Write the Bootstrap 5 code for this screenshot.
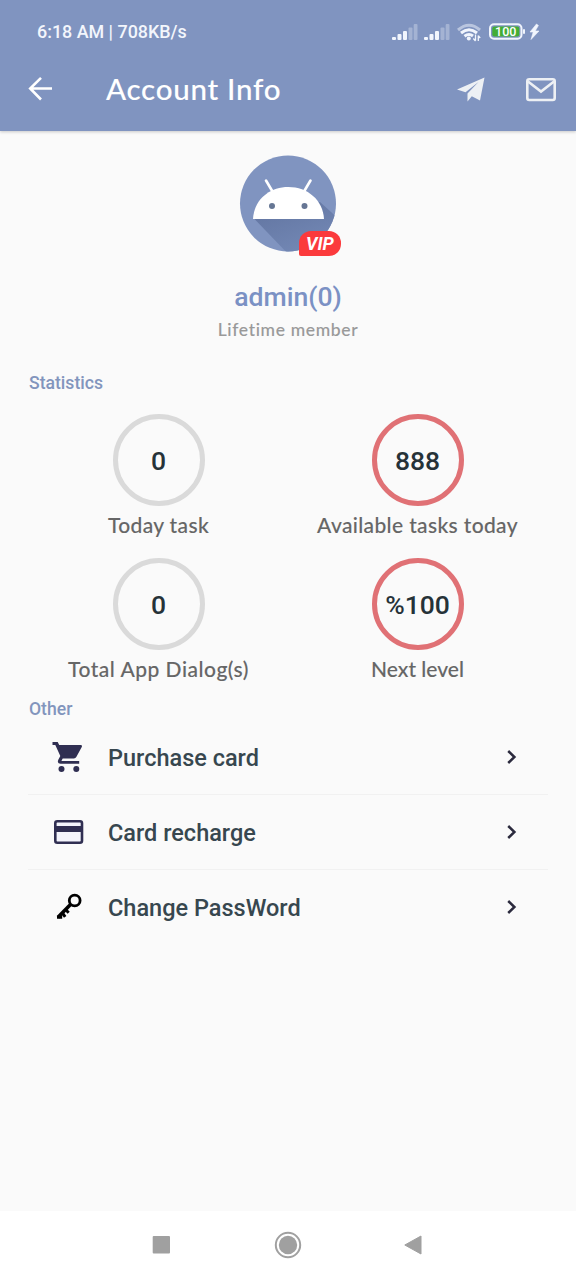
<!DOCTYPE html>
<html lang="en">
<head>
<meta charset="utf-8">
<meta name="viewport" content="width=device-width, initial-scale=1">
<title>Account Info</title>
<link href="https://cdn.jsdelivr.net/npm/bootstrap@5.3.0/dist/css/bootstrap.min.css" rel="stylesheet">
<style>
  body { background:#fafafa; font-family:Roboto,sans-serif; font-weight:500; color:#2c3a40; width:576px; height:1280px; overflow:hidden; }
  svg { display:block; flex:none; overflow:visible; }
  .geo { font-family:Lato,sans-serif; font-weight:500; -webkit-text-stroke:.1px currentColor; }
  .top { background:#8094c0; height:131px; box-shadow:0 1px 3px rgba(0,0,0,.2); color:#fff; }
  .status { height:64px; padding:0 36px 0 37px; font-size:17.9px; color:#f3f6fc; }
  .appbar { height:50px; padding:0 20px 0 28px; }
  .title { font-size:29.5px; line-height:50px; margin-left:53px; letter-spacing:.75px; }
  .send { margin-right:41px; }
  .avatar { width:96px; height:96px; margin-top:25px; }
  .vip { left:59px; top:75px; width:42px; height:25px; background:#fb3a3c; border-radius:12px 12px 12px 2px; color:#fff; font:italic 700 18px/25px Roboto,sans-serif; text-align:center; }
  .who { margin-top:27px; font-size:26.6px; line-height:36px; color:#7b91c4; }
  .level { font-size:17.5px; line-height:30px; color:#999; letter-spacing:.65px; }
  .section { font-size:17.6px; line-height:24px; color:#8295bd; padding-left:29px; }
  .stats { padding:0 29px; }
  .ring { width:92px; height:92px; border:5px solid #dadada; padding-top:2px; font-size:26.5px; color:#263238; }
  .ring.full { border-color:#e07175; }
  .cap { font-size:21px; line-height:37px; height:38px; color:#666; white-space:nowrap; letter-spacing:.36px; }
  .cap.wide { letter-spacing:.5px; }
  .cap.tight { letter-spacing:0; }
  .menu { margin:-1px 28px 0; }
  .menu .list-group-item { height:75px; padding:0 31px 0 24px; background:none; border-color:#f1f1f1; font-size:23.5px; color:#37474f; }
  .menu .list-group-item:last-child { height:74px; }
  .menu .list-group-item span { margin-left:24px; padding-top:3px; }
  .sysbar { height:69px; background:#fff; padding:0 154px 1px 152px; }
  .sysbar .home { margin-left:1px; }
</style>
</head>
<body class="d-flex flex-column">
<header class="top">
  <div class="status d-flex align-items-center justify-content-between">
    <span>6:18 AM | 708KB/s</span>
    <svg width="148" height="24" viewBox="392 20 148 24" fill="#f1f5fd">
      <g id="sig"><rect x="392" y="37" width="4" height="3" rx="1"/><rect x="397.500" y="34" width="4" height="6" rx="1"/><rect x="403" y="31" width="4" height="9" rx="1"/><rect x="408.500" y="27.500" width="4" height="12.500" rx="1" opacity=".32"/><rect x="413.700" y="24" width="3.800" height="16" rx="1" opacity=".32"/></g>
      <use href="#sig" x="32"/>
      <g fill="none" stroke="#f1f5fd" stroke-width="3"><path d="M458 30Q469 20.500 480 30" opacity=".5"/><path d="M461 33Q469 26.500 477 33"/><path d="M464.500 36.200Q469 32.800 473 36"/></g>
      <circle cx="468.800" cy="38.500" r="2"/>
      <path d="M475.500 34.500v6M473.300 38.500l2.200 2.500M478.300 41v-5.500M480.200 38l-1.900-2.300" stroke="#f1f5fd" stroke-width="1.300" fill="none"/>
      <rect x="490" y="24.300" width="31.500" height="14.400" rx="4" fill="#8094c0" stroke="#f1f5fd" stroke-width="2"/>
      <rect x="492.300" y="26.600" width="27" height="9.800" rx="2" fill="#43ad35"/>
      <rect x="523" y="29" width="2" height="5" rx="1"/>
      <text x="505.700" y="36" font-size="12.500" text-anchor="middle" fill="#fff">100</text>
      <path d="M536.500 24l-6.500 8h3.200l-2.200 7.500 8-8.500h-3.800l3.200-5.500z" stroke="#f1f5fd" stroke-width=".6"/>
    </svg>
  </div>
  <div class="appbar d-flex align-items-center">
    <svg width="25" height="24" fill="none" stroke="#fff" stroke-width="2.600"><path d="M24 11.500H2M13 .8L2.200 11.500 13 22.500"/></svg>
    <span class="title geo me-auto">Account Info</span>
    <svg width="28" height="24" viewBox="457 77.500 28 24" fill="#edf0f4" class="send"><path d="M484.500 78L457 90l8.500 2.800L478.500 82.500 467.500 94v8l4.300-5.200L480 101z"/></svg>
    <svg width="30" height="24" viewBox="526 77 30 24" fill="none" stroke="#edf0f4" stroke-width="2.600"><rect x="527.300" y="79.300" width="27.400" height="20.700" rx="2"/><path d="M528 81.500l13 10 13-10"/></svg>
  </div>
</header>
<main class="flex-grow-1">
  <div class="avatar position-relative mx-auto">
    <svg width="96" height="96" viewBox="0 0 96 96">
      <defs><clipPath id="disc"><circle cx="48" cy="47.500" r="48"/></clipPath><linearGradient id="sh" x1="0" y1="0" x2=".6" y2="1"><stop offset="0" stop-color="#60739f"/><stop offset="1" stop-color="#7489b6"/></linearGradient></defs>
      <circle cx="48" cy="47.500" r="48" fill="#8094c0"/>
      <path clip-path="url(#disc)" d="M14 62.500L50 100H100V64L80 46z" fill="url(#sh)"/>
      <path d="M13 63C14 44 29 31 48.300 31S83 44 84 63z" fill="#fff"/>
      <path d="M26 24.500l6.500 11M70.500 24.500l-6.500 11" stroke="#fff" stroke-width="2.600" stroke-linecap="round"/>
      <circle cx="32" cy="50" r="3" fill="#667694"/><circle cx="64.500" cy="50" r="3" fill="#667694"/>
    </svg>
    <div class="vip position-absolute">VIP</div>
  </div>
  <div class="who text-center">admin(0)</div>
  <div class="level geo text-center">Lifetime member</div>
  <div class="section" style="margin-top:26px">Statistics</div>
  <div class="stats row g-0 text-center" style="margin-top:19px">
    <div class="col-6"><div class="ring rounded-circle mx-auto d-flex align-items-center justify-content-center">0</div><div class="cap geo">Today task</div></div>
    <div class="col-6"><div class="ring full rounded-circle mx-auto d-flex align-items-center justify-content-center">888</div><div class="cap geo">Available tasks today</div></div>
  </div>
  <div class="stats row g-0 text-center" style="margin-top:14px">
    <div class="col-6"><div class="ring rounded-circle mx-auto d-flex align-items-center justify-content-center">0</div><div class="cap wide geo">Total App Dialog(s)</div></div>
    <div class="col-6"><div class="ring full rounded-circle mx-auto d-flex align-items-center justify-content-center">%100</div><div class="cap tight geo">Next level</div></div>
  </div>
  <div class="section" style="margin-top:9px">Other</div>
  <div class="menu list-group list-group-flush">
    <a class="list-group-item d-flex align-items-center">
      <svg width="32" height="32" viewBox="52 741 32 32" fill="#302f52"><path d="M52.500 742h5.200l1.500 3h21.500q2 0 1.200 1.800l-5.600 10.300q-.8 1.400-2.400 1.400H62.700l-1.300 2.500h17.800v2.800H60.500q-3.800-.5-2.200-4l2-3.700-5-11.100h-2.800z"/><circle cx="61.500" cy="769" r="3"/><circle cx="76.300" cy="769" r="3"/></svg>
      <span class="me-auto">Purchase card</span><svg width="10" height="14" fill="none" stroke="#2b2a3d" stroke-width="2.500"><path d="M1.200 1L7.400 7l-6.200 6"/></svg></a>
    <a class="list-group-item d-flex align-items-center">
      <svg width="32" height="32" viewBox="52 816 32 32"><rect x="55.300" y="821.300" width="26.700" height="21.400" rx="2" fill="#f4f5fc" stroke="#302f52" stroke-width="2.600"/><path d="M55 826h27.500v6H55z" fill="#302f52"/></svg>
      <span class="me-auto">Card recharge</span><svg width="10" height="14" fill="none" stroke="#2b2a3d" stroke-width="2.500"><path d="M1.200 1L7.400 7l-6.200 6"/></svg></a>
    <a class="list-group-item d-flex align-items-center">
      <svg width="32" height="32" viewBox="52 891 32 32" fill="none" stroke="#000" stroke-width="2.800"><circle cx="74.700" cy="900.500" r="5.400"/><path d="M70.500 904.500L58 917.300" stroke-width="3.600"/><path d="M57 917.300h5.200M62 912.500l3.200 4.300M65.500 909.500l3.200 3.200" stroke-width="3"/></svg>
      <span class="me-auto">Change PassWord</span><svg width="10" height="14" fill="none" stroke="#2b2a3d" stroke-width="2.500"><path d="M1.200 1L7.400 7l-6.200 6"/></svg></a>
  </div>
</main>
<footer class="sysbar d-flex align-items-center justify-content-between">
  <svg width="18" height="18" fill="#a0a0a0"><rect x=".7" width="17.300" height="17.600" rx="1"/></svg>
  <svg class="home" width="28" height="28" fill="#a0a0a0"><circle cx="14" cy="14" r="12.200" fill="none" stroke="#a0a0a0" stroke-width="2"/><circle cx="14" cy="14" r="9.200"/></svg>
  <svg width="18" height="20" fill="#a0a0a0"><path d="M.8 10L17 1v18z" stroke="#a0a0a0" stroke-linejoin="round"/></svg>
</footer>
<script src="https://cdn.jsdelivr.net/npm/bootstrap@5.3.0/dist/js/bootstrap.bundle.min.js"></script>
</body>
</html>
